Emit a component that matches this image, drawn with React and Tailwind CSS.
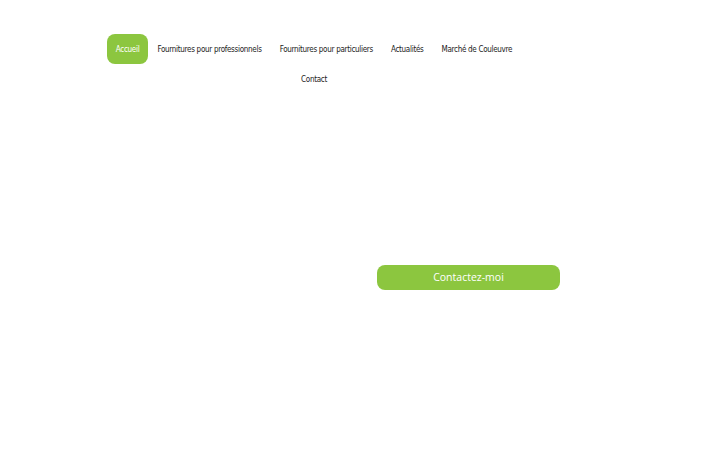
export default function App() {
  const items = [
    "Fournitures pour professionnels",
    "Fournitures pour particuliers",
    "Actualités",
    "Marché de Couleuvre",
  ];

  return (
    <div className="w-[720px] h-[450px] bg-white relative overflow-hidden">
      {/* ================= NAV ================= */}
      <nav className="pt-[34px] pl-[100px] w-[528px]">
        <ul
          className="flex flex-wrap justify-center text-[8px] tracking-[-0.3px] text-[#1a1a1a]"
          style={{ fontFamily: '"DejaVu Sans Condensed", "DejaVu Sans", sans-serif' }}
        >
          <li className="h-[30px] px-[9px] pt-[2px] flex items-center rounded-[8px] bg-[#8cc63f] text-white">
            Accueil
          </li>
          {items.map((t) => (
            <li key={t} className="h-[30px] px-[9px] pt-[2px] flex items-center">
              {t}
            </li>
          ))}
          <li className="h-[30px] px-[9px] pt-[2px] flex items-center">Contact</li>
        </ul>
      </nav>

      {/* ================= CTA ================= */}
      <div className="mt-[171px] pl-[377px]">
        <button
          className="w-[183px] h-[25px] rounded-[8px] bg-[#8cc63f] text-white text-[10.5px] flex items-center justify-center"
          style={{ fontFamily: '"Open Sans", sans-serif' }}
        >
          Contactez-moi
        </button>
      </div>
    </div>
  );
}
